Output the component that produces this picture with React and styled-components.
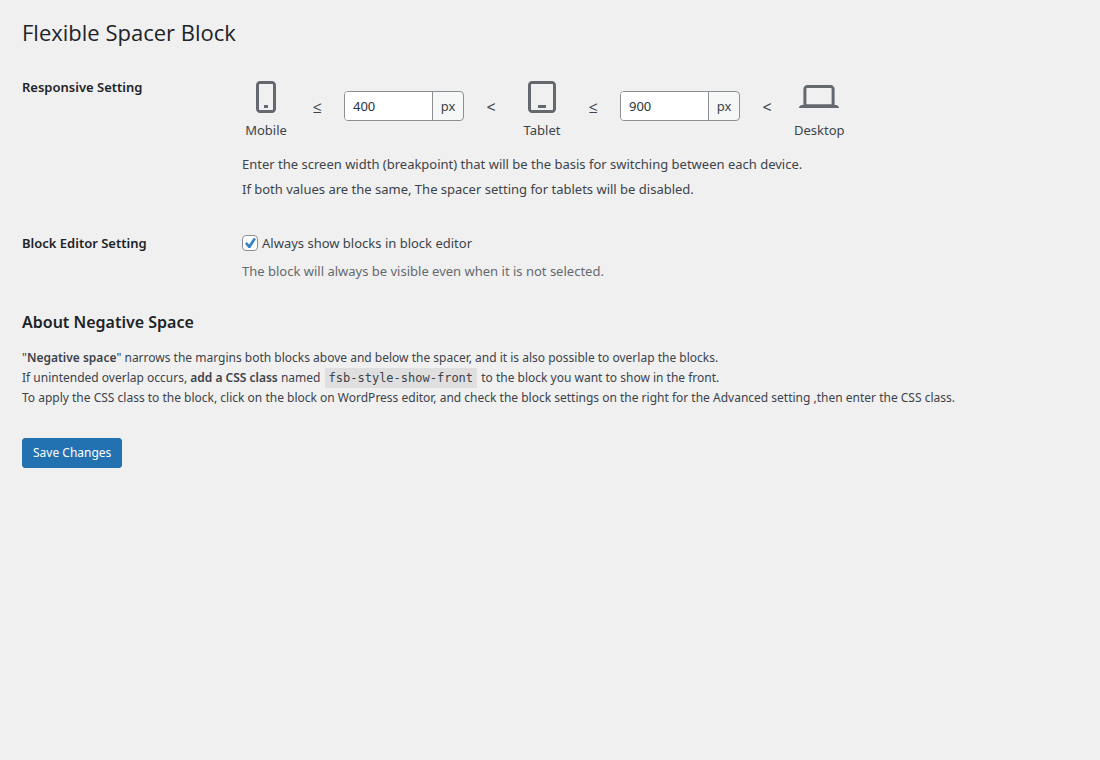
import React from "react";
import styled, { createGlobalStyle } from "styled-components";

const GlobalStyle = createGlobalStyle`
  *, *::before, *::after { box-sizing: border-box; }
  body {
    margin: 0;
    background: #f0f0f0;
    color: #3c434a;
    font-family: "Noto Sans", "Open Sans", sans-serif;
    font-size: 13px;
    line-height: 20px;
  }
`;

const Page = styled.main`
  padding: 15px 20px 20px 22px;
`;

const Title = styled.h1`
  margin: 0;
  color: #1d2327;
  font-family: "Open Sans", sans-serif;
  font-size: 22px;
  font-weight: 400;
  line-height: 34px;
`;

const Settings = styled.div`
  display: grid;
  gap: 31px;
  padding: 24px 0 26px;
`;

const SettingRow = styled.section`
  display: grid;
  grid-template-columns: 220px minmax(0, 1fr);
`;

const SettingName = styled.h2`
  margin: 0;
  padding-top: ${(p) => p.$top}px;
  color: #1d2327;
  font-size: 13px;
  font-weight: 600;
  line-height: 20px;
`;

const Breakpoints = styled.div`
  display: flex;
  align-items: center;
  margin-bottom: 13px;
`;

const Device = styled.div`
  display: flex;
  flex-direction: column;
  align-items: center;
  min-width: 48px;
  line-height: 18px;

  svg {
    display: block;
    width: 48px;
    height: 48px;
    fill: #646970;
  }
`;

const Operator = styled.span`
  width: 54px;
  padding-top: 2px;
  text-align: center;
  font-size: 16px;
`;

const UnitField = styled.label`
  display: flex;
  width: 120px;
  height: 30px;
  border: 1px solid #8c8f94;
  border-radius: 4px;
  overflow: hidden;
  background: #f6f7f7;
`;

const NumberInput = styled.input`
  flex: 1;
  min-width: 0;
  padding: 0 8px;
  border: 0;
  border-right: 1px solid #8c8f94;
  background: #fff;
  color: #2c3338;
  font: inherit;
`;

const Unit = styled.span`
  width: 30px;
  line-height: 28px;
  text-align: center;
`;

const Help = styled.p`
  margin: 0;
  color: ${(p) => (p.$muted ? "#646970" : "inherit")};
  line-height: 25px;
`;

const CheckLabel = styled.label`
  display: flex;
  align-items: center;
  gap: 4px;
  margin-bottom: 6px;
  line-height: 20px;
`;

const CheckWrap = styled.span`
  display: grid;
  width: 16px;
  height: 16px;

  > * { grid-area: 1 / 1; }

  svg {
    width: 16px;
    height: 16px;
    fill: #3582c4;
    pointer-events: none;
    visibility: hidden;
  }

  input:checked + svg { visibility: visible; }
`;

const Checkbox = styled.input`
  appearance: none;
  width: 16px;
  height: 16px;
  margin: 0;
  border: 1px solid #8c8f94;
  border-radius: 4px;
  background: #fff;
`;

const About = styled.section`
  padding-bottom: 30px;
`;

const AboutTitle = styled.h2`
  margin: 0 0 14px;
  color: #1d2327;
  font-size: 16px;
  font-weight: 600;
  line-height: 24px;
`;

const AboutText = styled.p`
  margin: 0;
  font-size: 12px;
  line-height: 20px;

  strong { font-weight: 600; }
`;

const Code = styled.code`
  margin: 0 1px;
  padding: 3px 4px;
  background: #dfdfdf;
  font-family: "DejaVu Sans Mono", monospace;
  font-size: 12px;
`;

const SaveButton = styled.button`
  height: 30px;
  padding: 0 10px;
  border: 1px solid #2271b1;
  border-radius: 3px;
  background: #2271b1;
  color: #fff;
  font-family: inherit;
  font-size: 12px;
  line-height: 28px;
`;

const icons = {
  Mobile:
    "M15 4H9c-1.1 0-2 .9-2 2v12c0 1.1.9 2 2 2h6c1.1 0 2-.9 2-2V6c0-1.1-.9-2-2-2zm.5 14c0 .3-.2.5-.5.5H9c-.3 0-.5-.2-.5-.5V6c0-.3.2-.5.5-.5h6c.3 0 .5.2.5.5v12zm-4.5-.5h2V16h-2v1.5z",
  Tablet:
    "M17 4H7c-1.1 0-2 .9-2 2v12c0 1.1.9 2 2 2h10c1.1 0 2-.9 2-2V6c0-1.1-.9-2-2-2zm.5 14c0 .3-.2.5-.5.5H7c-.3 0-.5-.2-.5-.5V6c0-.3.2-.5.5-.5h10c.3 0 .5.2.5.5v12zm-7.5-.5h4V16h-4v1.5z",
  Desktop:
    "M20.5 16h-.7V8c0-1.1-.9-2-2-2H6.2c-1.1 0-2 .9-2 2v8h-.7c-.8 0-1.5.7-1.5 1.5h20c0-.8-.7-1.5-1.5-1.5zM5.7 8c0-.3.2-.5.5-.5h11.6c.3 0 .5.2.5.5v7.6H5.7V8z",
};

function DeviceItem({ name }) {
  return (
    <Device>
      <svg viewBox="0 0 24 24" aria-hidden="true">
        <path d={icons[name]} />
      </svg>
      <span>{name}</span>
    </Device>
  );
}

function BreakpointField({ label, value }) {
  return (
    <UnitField>
      <NumberInput type="text" inputMode="numeric" aria-label={label} defaultValue={value} />
      <Unit>px</Unit>
    </UnitField>
  );
}

export default function App() {
  return (
    <>
      <GlobalStyle />
      <Page>
        <Title>Flexible Spacer Block</Title>
        <form onSubmit={(e) => e.preventDefault()}>
          <Settings>
            <SettingRow>
              <SettingName $top={4}>Responsive Setting</SettingName>
              <div>
                <Breakpoints>
                  <DeviceItem name="Mobile" />
                  <Operator>≤</Operator>
                  <BreakpointField label="Mobile breakpoint" value="400" />
                  <Operator>&lt;</Operator>
                  <DeviceItem name="Tablet" />
                  <Operator>≤</Operator>
                  <BreakpointField label="Tablet breakpoint" value="900" />
                  <Operator>&lt;</Operator>
                  <DeviceItem name="Desktop" />
                </Breakpoints>
                <Help>
                  Enter the screen width (breakpoint) that will be the basis for switching between
                  each device.
                  <br />
                  If both values are the same, The spacer setting for tablets will be disabled.
                </Help>
              </div>
            </SettingRow>
            <SettingRow>
              <SettingName $top={0}>Block Editor Setting</SettingName>
              <div>
                <CheckLabel>
                  <CheckWrap>
                    <Checkbox type="checkbox" defaultChecked />
                    <svg viewBox="0 0 16 16" aria-hidden="true">
                      <path d="M11.8 2.8 L14 4.1 L8.3 13 L6.5 13 L3 8.7 L4.8 7.1 L7.1 9.4 Z" />
                    </svg>
                  </CheckWrap>
                  Always show blocks in block editor
                </CheckLabel>
                <Help $muted>The block will always be visible even when it is not selected.</Help>
              </div>
            </SettingRow>
          </Settings>
          <About>
            <AboutTitle>About Negative Space</AboutTitle>
            <AboutText>
              "<strong>Negative space</strong>" narrows the margins both blocks above and below the
              spacer, and it is also possible to overlap the blocks.
              <br />
              If unintended overlap occurs, <strong>add a CSS class</strong> named{" "}
              <Code>fsb-style-show-front</Code> to the block you want to show in the front.
              <br />
              To apply the CSS class to the block, click on the block on WordPress editor, and check
              the block settings on the right for the Advanced setting ,then enter the CSS class.
            </AboutText>
          </About>
          <SaveButton type="submit">Save Changes</SaveButton>
        </form>
      </Page>
    </>
  );
}
